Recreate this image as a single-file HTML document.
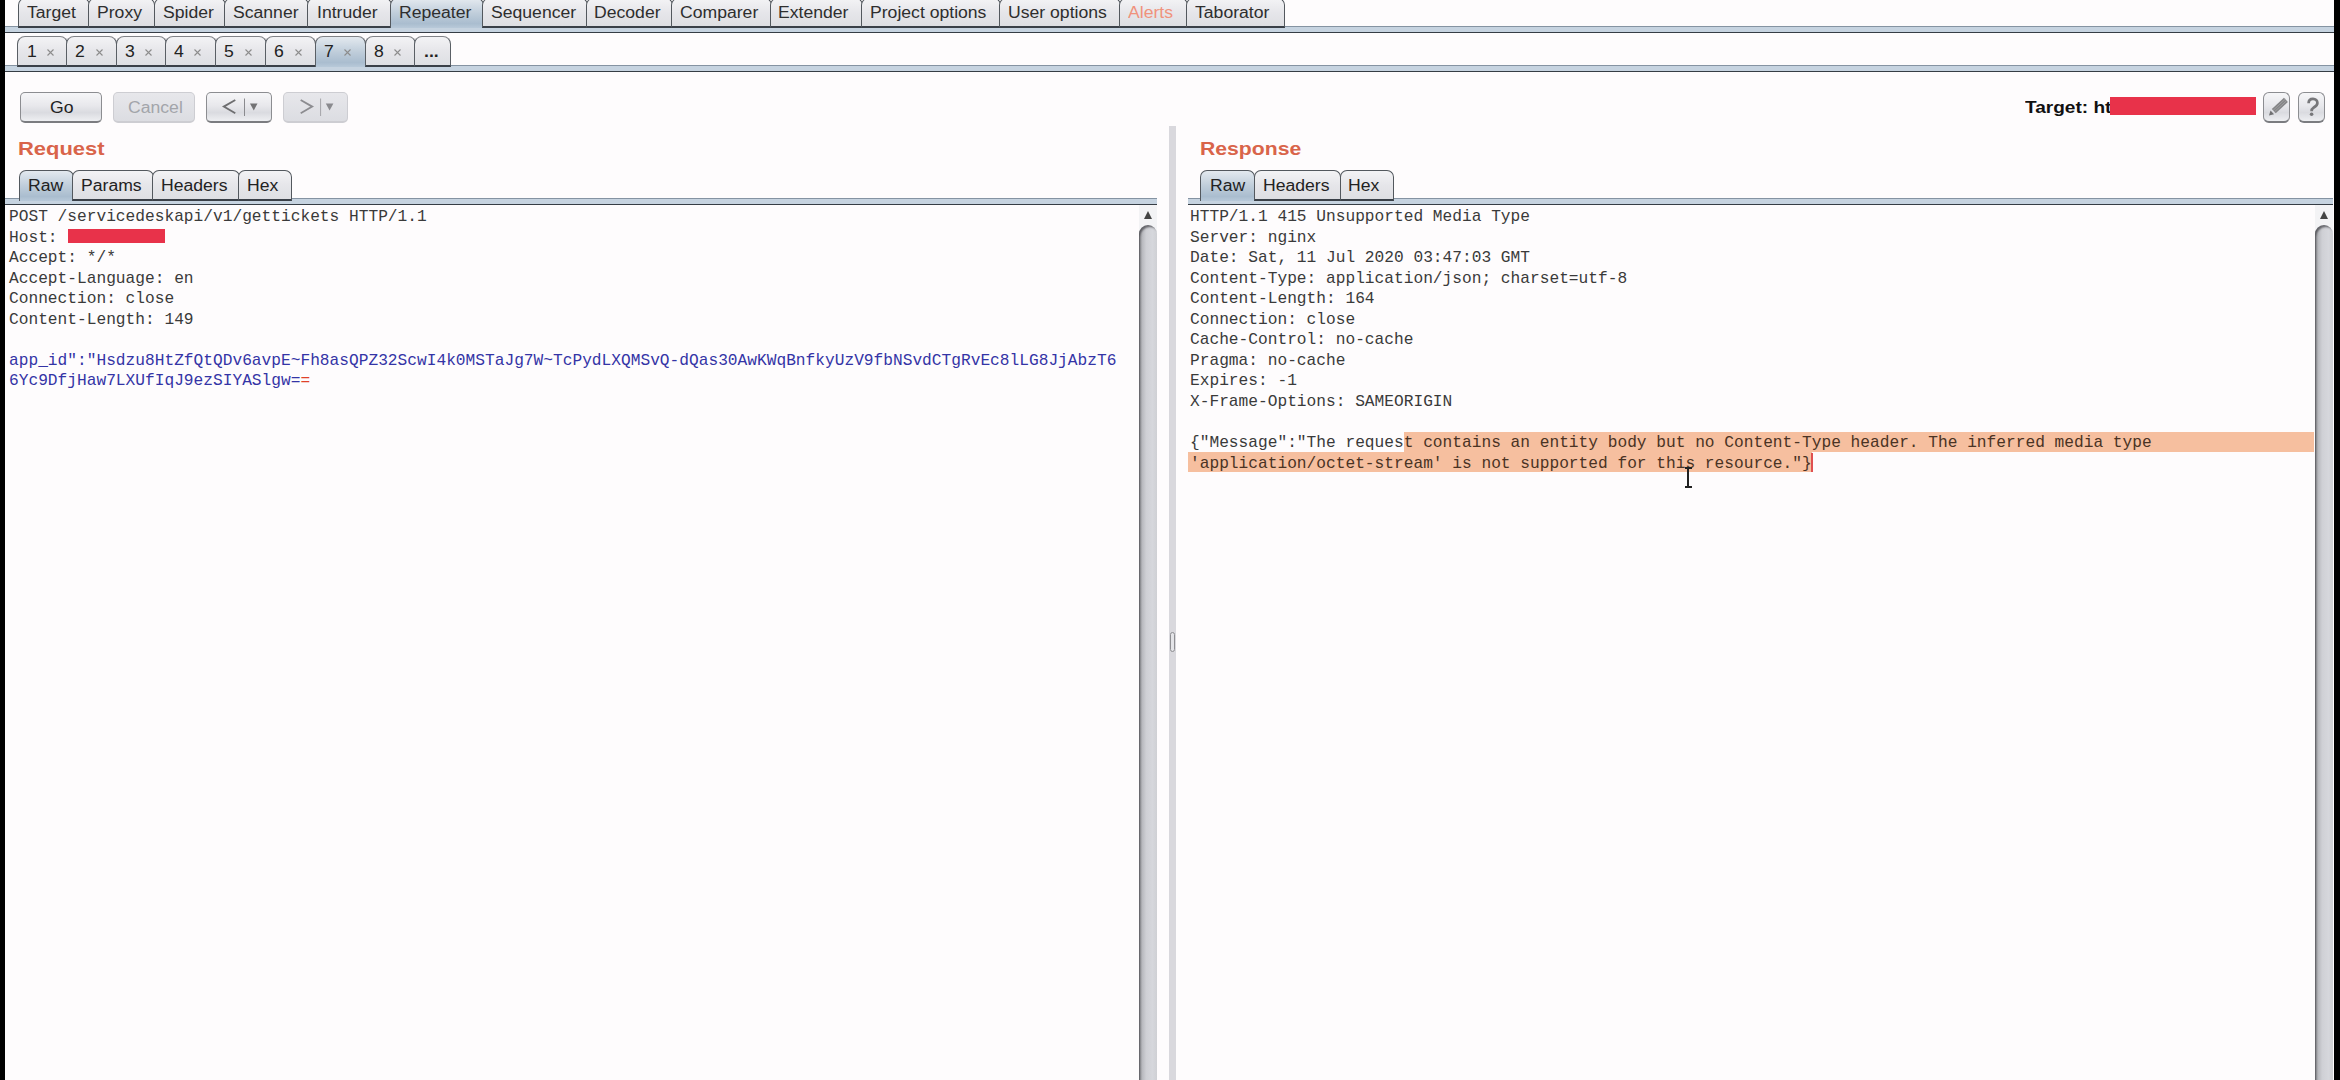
<!DOCTYPE html><html><head><meta charset="utf-8"><style>
*{margin:0;padding:0;box-sizing:border-box}
html,body{width:2340px;height:1080px;overflow:hidden;background:#fefcfd}
body{position:relative;font-family:"Liberation Sans",sans-serif;color:#2b2b2b}
.a{position:absolute}
.t{position:absolute;white-space:nowrap;line-height:1;transform-origin:0 0}
.tab{position:absolute;border:1.5px solid #53585e;border-bottom:2px solid #3a4048;border-radius:6px 6px 0 0;
 background:linear-gradient(#f3f3f5,#e6e6ea 50%,#dedfe3)}
.tab.sel{background:linear-gradient(#e3e9ef,#bfcdda 50%,#aabdcf 85%,#b8c9d9);border-bottom:none}
.band{position:absolute;background:#c6d3e0;border-top:1px solid #8593a2;border-bottom:1.5px solid #363d45}
.btn{position:absolute;border:1.5px solid #8c8d91;border-bottom:2px solid #7b7c80;border-radius:5px;background:linear-gradient(#f6f6f8,#e8e8ec 45%,#dadbe0 70%,#eeeff2)}
.btn.dis{border-color:#cdcdd2;background:linear-gradient(#e7e7eb,#dcdde2)}
.mono{font-family:"Liberation Mono",monospace;font-size:16.2px;line-height:20.55px;white-space:pre;color:#3a3a3a}
.sbtrack{position:absolute;background:#f3f3f5}
.thumb{position:absolute;background:linear-gradient(90deg,#8d8e92,#b8b9be 18%,#cfd0d5 40%,#d6d7dc 75%,#cfd0d4)}
</style></head><body>
<div class="a" style="left:0;top:0;width:5px;height:1080px;background:#000"></div>
<div class="a" style="left:2334px;top:0;width:6px;height:1080px;background:#000"></div>
<div class="band" style="left:5px;top:26px;width:2329px;height:7px"></div>
<div class="tab" style="left:17.5px;top:-2px;width:72.0px;height:29.5px;border-radius:7px 7px 0 0"></div>
<div class="tab" style="left:88px;top:-2px;width:67.0px;height:29.5px;border-radius:7px 7px 0 0"></div>
<div class="tab" style="left:153.5px;top:-2px;width:72.0px;height:29.5px;border-radius:7px 7px 0 0"></div>
<div class="tab" style="left:224px;top:-2px;width:84.5px;height:29.5px;border-radius:7px 7px 0 0"></div>
<div class="tab" style="left:307px;top:-2px;width:84.5px;height:29.5px;border-radius:7px 7px 0 0"></div>
<div class="tab sel" style="left:390px;top:-2px;width:93.5px;height:29.5px;border-radius:7px 7px 0 0"></div>
<div class="tab" style="left:482px;top:-2px;width:105.5px;height:29.5px;border-radius:7px 7px 0 0"></div>
<div class="tab" style="left:586px;top:-2px;width:86.5px;height:29.5px;border-radius:7px 7px 0 0"></div>
<div class="tab" style="left:671px;top:-2px;width:100.5px;height:29.5px;border-radius:7px 7px 0 0"></div>
<div class="tab" style="left:770px;top:-2px;width:92.5px;height:29.5px;border-radius:7px 7px 0 0"></div>
<div class="tab" style="left:861px;top:-2px;width:139.5px;height:29.5px;border-radius:7px 7px 0 0"></div>
<div class="tab" style="left:999px;top:-2px;width:121.5px;height:29.5px;border-radius:7px 7px 0 0"></div>
<div class="tab" style="left:1119px;top:-2px;width:68.5px;height:29.5px;border-radius:7px 7px 0 0"></div>
<div class="tab" style="left:1186px;top:-2px;width:98.5px;height:29.5px;border-radius:7px 7px 0 0"></div>
<div class="t" style="left:27.40px;top:5.00px;font-size:16px;color:#2e2e2e;transform:scaleX(1.1);">Target</div>
<div class="t" style="left:96.60px;top:5.00px;font-size:16px;color:#2e2e2e;transform:scaleX(1.1);">Proxy</div>
<div class="t" style="left:162.70px;top:5.00px;font-size:16px;color:#2e2e2e;transform:scaleX(1.1);">Spider</div>
<div class="t" style="left:232.50px;top:5.00px;font-size:16px;color:#2e2e2e;transform:scaleX(1.1);">Scanner</div>
<div class="t" style="left:316.60px;top:5.00px;font-size:16px;color:#2e2e2e;transform:scaleX(1.1);">Intruder</div>
<div class="t" style="left:398.60px;top:5.00px;font-size:16px;color:#2e2e2e;transform:scaleX(1.1);">Repeater</div>
<div class="t" style="left:490.90px;top:5.00px;font-size:16px;color:#2e2e2e;transform:scaleX(1.1);">Sequencer</div>
<div class="t" style="left:594.30px;top:5.00px;font-size:16px;color:#2e2e2e;transform:scaleX(1.1);">Decoder</div>
<div class="t" style="left:680.10px;top:5.00px;font-size:16px;color:#2e2e2e;transform:scaleX(1.1);">Comparer</div>
<div class="t" style="left:778.30px;top:5.00px;font-size:16px;color:#2e2e2e;transform:scaleX(1.1);">Extender</div>
<div class="t" style="left:869.50px;top:5.00px;font-size:16px;color:#2e2e2e;transform:scaleX(1.1);">Project options</div>
<div class="t" style="left:1007.50px;top:5.00px;font-size:16px;color:#2e2e2e;transform:scaleX(1.1);">User options</div>
<div class="t" style="left:1128.00px;top:5.00px;font-size:16px;color:#f0927c;transform:scaleX(1.1);">Alerts</div>
<div class="t" style="left:1195.40px;top:5.00px;font-size:16px;color:#2e2e2e;transform:scaleX(1.1);">Taborator</div>
<div class="band" style="left:5px;top:65px;width:2329px;height:7px"></div>
<div class="tab" style="left:17px;top:36px;width:50.5px;height:31px;border-radius:8px 8px 0 0;border-width:1.8px 1.5px 2px;border-color:#808286 #5a5f65 #3a4048"></div>
<div class="tab" style="left:66px;top:36px;width:51.0px;height:31px;border-radius:8px 8px 0 0;border-width:1.8px 1.5px 2px;border-color:#808286 #5a5f65 #3a4048"></div>
<div class="tab" style="left:115.5px;top:36px;width:51.0px;height:31px;border-radius:8px 8px 0 0;border-width:1.8px 1.5px 2px;border-color:#808286 #5a5f65 #3a4048"></div>
<div class="tab" style="left:165px;top:36px;width:51.5px;height:31px;border-radius:8px 8px 0 0;border-width:1.8px 1.5px 2px;border-color:#808286 #5a5f65 #3a4048"></div>
<div class="tab" style="left:215px;top:36px;width:51.5px;height:31px;border-radius:8px 8px 0 0;border-width:1.8px 1.5px 2px;border-color:#808286 #5a5f65 #3a4048"></div>
<div class="tab" style="left:265px;top:36px;width:51.0px;height:31px;border-radius:8px 8px 0 0;border-width:1.8px 1.5px 2px;border-color:#808286 #5a5f65 #3a4048"></div>
<div class="tab sel" style="left:314.5px;top:36px;width:51.5px;height:31px;border-radius:8px 8px 0 0;border-width:1.8px 1.5px 2px;border-color:#808286 #5a5f65 #3a4048"></div>
<div class="tab" style="left:364.5px;top:36px;width:51.0px;height:31px;border-radius:8px 8px 0 0;border-width:1.8px 1.5px 2px;border-color:#808286 #5a5f65 #3a4048"></div>
<div class="tab" style="left:414px;top:36px;width:37.0px;height:31px;border-radius:8px 8px 0 0;border-width:1.8px 1.5px 2px;border-color:#808286 #5a5f65 #3a4048"></div>
<div class="t" style="left:26.90px;top:44.00px;font-size:16px;color:#222;transform:scaleX(1.1);">1</div>
<svg class="a" style="left:46.7px;top:48.8px" width="7" height="7" viewBox="0 0 7 7"><path d="M0.5 0.5L6.5 6.5M6.5 0.5L0.5 6.5" stroke="#8c8c8c" stroke-width="1.1"/></svg>
<div class="t" style="left:75.10px;top:44.00px;font-size:16px;color:#222;transform:scaleX(1.1);">2</div>
<svg class="a" style="left:95.9px;top:48.8px" width="7" height="7" viewBox="0 0 7 7"><path d="M0.5 0.5L6.5 6.5M6.5 0.5L0.5 6.5" stroke="#8c8c8c" stroke-width="1.1"/></svg>
<div class="t" style="left:124.80px;top:44.00px;font-size:16px;color:#222;transform:scaleX(1.1);">3</div>
<svg class="a" style="left:145.1px;top:48.8px" width="7" height="7" viewBox="0 0 7 7"><path d="M0.5 0.5L6.5 6.5M6.5 0.5L0.5 6.5" stroke="#8c8c8c" stroke-width="1.1"/></svg>
<div class="t" style="left:174.10px;top:44.00px;font-size:16px;color:#222;transform:scaleX(1.1);">4</div>
<svg class="a" style="left:194.4px;top:48.8px" width="7" height="7" viewBox="0 0 7 7"><path d="M0.5 0.5L6.5 6.5M6.5 0.5L0.5 6.5" stroke="#8c8c8c" stroke-width="1.1"/></svg>
<div class="t" style="left:223.80px;top:44.00px;font-size:16px;color:#222;transform:scaleX(1.1);">5</div>
<svg class="a" style="left:244.9px;top:48.8px" width="7" height="7" viewBox="0 0 7 7"><path d="M0.5 0.5L6.5 6.5M6.5 0.5L0.5 6.5" stroke="#8c8c8c" stroke-width="1.1"/></svg>
<div class="t" style="left:274.30px;top:44.00px;font-size:16px;color:#222;transform:scaleX(1.1);">6</div>
<svg class="a" style="left:294.6px;top:48.8px" width="7" height="7" viewBox="0 0 7 7"><path d="M0.5 0.5L6.5 6.5M6.5 0.5L0.5 6.5" stroke="#8c8c8c" stroke-width="1.1"/></svg>
<div class="t" style="left:324.10px;top:44.00px;font-size:16px;color:#222;transform:scaleX(1.1);">7</div>
<svg class="a" style="left:344.4px;top:48.8px" width="7" height="7" viewBox="0 0 7 7"><path d="M0.5 0.5L6.5 6.5M6.5 0.5L0.5 6.5" stroke="#8c8c8c" stroke-width="1.1"/></svg>
<div class="t" style="left:373.80px;top:44.00px;font-size:16px;color:#222;transform:scaleX(1.1);">8</div>
<svg class="a" style="left:394.1px;top:48.8px" width="7" height="7" viewBox="0 0 7 7"><path d="M0.5 0.5L6.5 6.5M6.5 0.5L0.5 6.5" stroke="#8c8c8c" stroke-width="1.1"/></svg>
<div class="t" style="left:423.60px;top:44.00px;font-size:16px;color:#222;font-weight:bold;transform:scaleX(1.1);">...</div>
<div class="btn" style="left:20px;top:92px;width:82px;height:31px"></div>
<div class="btn dis" style="left:113px;top:92px;width:82px;height:31px"></div>
<div class="btn" style="left:206px;top:92px;width:66px;height:31px"></div>
<div class="btn dis" style="left:283px;top:92px;width:65px;height:31px"></div>
<div class="t" style="left:49.70px;top:100.00px;font-size:16px;color:#222;transform:scaleX(1.1);">Go</div>
<div class="t" style="left:127.50px;top:100.00px;font-size:16px;color:#a3a5aa;transform:scaleX(1.1);">Cancel</div>
<div class="t" style="left:2024.50px;top:100.00px;font-size:16px;color:#111;font-weight:bold;transform:scaleX(1.19);">Target: ht</div>
<div class="a" style="left:2110px;top:97px;width:146px;height:18px;background:#e8324a"></div>
<div class="btn" style="left:2262.5px;top:92px;width:27.5px;height:30.5px;border-radius:6px"></div>
<div class="btn" style="left:2297.8px;top:92px;width:27.5px;height:30.5px;border-radius:6px"></div>
<div class="a" style="left:1169px;top:126px;width:7px;height:954px;background:#d9d8dd"></div>
<div class="a" style="left:1170px;top:632px;width:5px;height:20px;border:1px solid #8e8e92;border-radius:3px;background:#e4e4e8"></div>
<div class="t" style="left:17.70px;top:139.00px;font-size:19px;color:#d9644a;font-weight:bold;transform:scaleX(1.155);">Request</div>
<div class="band" style="left:5px;top:198px;width:1152px;height:7px"></div>
<div class="tab sel" style="left:18.5px;top:170px;width:55.0px;height:30.5px;border-radius:7px 7px 0 0"></div>
<div class="tab" style="left:72px;top:170px;width:81.5px;height:30.5px;border-radius:7px 7px 0 0"></div>
<div class="tab" style="left:152px;top:170px;width:87.5px;height:30.5px;border-radius:7px 7px 0 0"></div>
<div class="tab" style="left:238px;top:170px;width:53.5px;height:30.5px;border-radius:7px 7px 0 0"></div>
<div class="t" style="left:27.80px;top:178.00px;font-size:16px;color:#222;transform:scaleX(1.1);">Raw</div>
<div class="t" style="left:81.10px;top:178.00px;font-size:16px;color:#222;transform:scaleX(1.1);">Params</div>
<div class="t" style="left:161.00px;top:178.00px;font-size:16px;color:#222;transform:scaleX(1.1);">Headers</div>
<div class="t" style="left:247.10px;top:178.00px;font-size:16px;color:#222;transform:scaleX(1.1);">Hex</div>
<div class="sbtrack" style="left:1139px;top:205px;width:18px;height:875px"></div>
<div class="a" style="left:1143.5px;top:211px;width:0;height:0;border-left:4.5px solid transparent;border-right:4.5px solid transparent;border-bottom:8px solid #444"></div>
<div class="thumb" style="left:1139px;top:225px;width:18px;height:855px;border-radius:9px 9px 0 0;box-shadow:inset 2px 3px 2px -1px rgba(70,70,75,.75)"></div>
<div class="t" style="left:1200.30px;top:139.00px;font-size:19px;color:#d9644a;font-weight:bold;transform:scaleX(1.115);">Response</div>
<div class="band" style="left:1188px;top:198px;width:1145px;height:7px"></div>
<div class="tab sel" style="left:1200px;top:170px;width:55.0px;height:30.5px;border-radius:7px 7px 0 0"></div>
<div class="tab" style="left:1253.5px;top:170px;width:87.5px;height:30.5px;border-radius:7px 7px 0 0"></div>
<div class="tab" style="left:1339.5px;top:170px;width:54.5px;height:30.5px;border-radius:7px 7px 0 0"></div>
<div class="t" style="left:1209.50px;top:178.00px;font-size:16px;color:#222;transform:scaleX(1.1);">Raw</div>
<div class="t" style="left:1262.80px;top:178.00px;font-size:16px;color:#222;transform:scaleX(1.1);">Headers</div>
<div class="t" style="left:1348.40px;top:178.00px;font-size:16px;color:#222;transform:scaleX(1.1);">Hex</div>
<div class="sbtrack" style="left:2315px;top:205px;width:18px;height:875px"></div>
<div class="a" style="left:2319.5px;top:211px;width:0;height:0;border-left:4.5px solid transparent;border-right:4.5px solid transparent;border-bottom:8px solid #444"></div>
<div class="thumb" style="left:2315px;top:225px;width:18px;height:855px;border-radius:9px 9px 0 0;box-shadow:inset 2px 3px 2px -1px rgba(70,70,75,.75)"></div>
<div class="a mono" style="left:9px;top:207px">POST /servicedeskapi/v1/gettickets HTTP/1.1
Host: 
Accept: */*
Accept-Language: en
Connection: close
Content-Length: 149

<span style="color:#3434a6">app_id&quot;:&quot;Hsdzu8HtZfQtQDv6avpE~Fh8asQPZ32ScwI4k0MSTaJg7W~TcPydLXQMSvQ-dQas30AwKWqBnfkyUzV9fbNSvdCTgRvEc8lLG8JjAbzT6
6Yc9DfjHaw7LXUfIqJ9ezSIYASlgw=</span><span style="color:#e0402a">=</span></div>
<div class="a" style="left:68px;top:229px;width:97px;height:14px;background:#e8324a"></div>
<div class="a" style="left:1404px;top:432px;width:910px;height:20px;background:#f6bf9f"></div>
<div class="a" style="left:1188px;top:452px;width:624px;height:20px;background:#f6bf9f"></div>
<div class="a" style="left:1811px;top:453px;width:2px;height:19px;background:#e05050"></div>
<div class="a mono" style="left:1190px;top:207px">HTTP/1.1 415 Unsupported Media Type
Server: nginx
Date: Sat, 11 Jul 2020 03:47:03 GMT
Content-Type: application/json; charset=utf-8
Content-Length: 164
Connection: close
Cache-Control: no-cache
Pragma: no-cache
Expires: -1
X-Frame-Options: SAMEORIGIN

{&quot;Message&quot;:&quot;The reques<span style="color:#4a3324">t contains an entity body but no Content-Type header. The inferred media type
&#x27;application/octet-stream&#x27; is not supported for this resource.&quot;}</span></div>
<div class="a" style="left:1687px;top:467px;width:2px;height:21px;background:#222"></div>
<div class="a" style="left:1684.5px;top:467px;width:7px;height:2px;background:#222"></div>
<div class="a" style="left:1684.5px;top:486px;width:7px;height:2px;background:#222"></div>
<svg class="a" style="left:0;top:0" width="2340" height="1080" viewBox="0 0 2340 1080">
<polyline points="235.3,100 223.8,106.6 235.3,113.2" fill="none" stroke="#6e6e70" stroke-width="1.8"/>
<line x1="244.5" y1="98.5" x2="244.5" y2="116" stroke="#8a8a8e" stroke-width="1"/>
<polygon points="250,103.5 257.5,103.5 253.75,110.5" fill="#727274"/>
<polyline points="300.7,100 312.2,106.6 300.7,113.2" fill="none" stroke="#8c8c90" stroke-width="1.8"/>
<line x1="320.6" y1="98.5" x2="320.6" y2="116" stroke="#a4a4a8" stroke-width="1"/>
<polygon points="325.8,103.5 333.4,103.5 329.6,110.5" fill="#8a8a8e"/>
<g transform="translate(2269,115.5) rotate(-42.6)">
<polygon points="0,0 4.5,-2.6 4.5,2.6" fill="#707072"/>
<rect x="6.5" y="-2.9" width="16.5" height="5.8" fill="#858587"/>
<line x1="6.5" y1="-1" x2="23" y2="-1" stroke="#a8a8aa" stroke-width="0.7"/>
<line x1="6.5" y1="1" x2="23" y2="1" stroke="#a8a8aa" stroke-width="0.7"/>
</g>
<path d="M2308.6,103.2 C2308.6,100.2 2310.8,98.9 2313,98.9 C2315.6,98.9 2317.4,100.6 2317.4,103 C2317.4,105.6 2315.2,106.6 2313.6,107.6 C2312,108.6 2311.6,109.6 2311.6,111.2" fill="none" stroke="#77777a" stroke-width="2.7"/>
<circle cx="2311.6" cy="114.2" r="1.8" fill="#77777a"/>
</svg>
</body></html>
